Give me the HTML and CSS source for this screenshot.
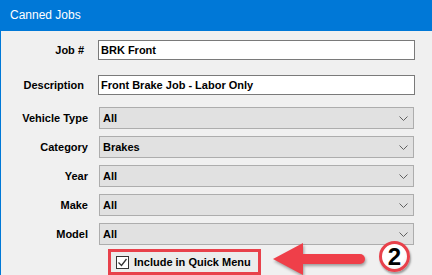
FILE: index.html
```html
<!DOCTYPE html>
<html lang="en">
<head>
    <meta charset="UTF-8" />
    <title>Canned Jobs</title>
    <link rel="stylesheet" href="styles.css">
</head>
<body>
<div class="window">
    <div class="titlebar">Canned Jobs</div>

    <div class="content">
        <div class="form form-top">
            <span class="label">Job #</span>
            <div class="field">BRK Front</div>

            <span class="label">Description</span>
            <div class="field">Front Brake Job - Labor Only</div>
        </div>

        <div class="form form-lists">
            <span class="label">Vehicle Type</span>
            <div class="combo"><span>All</span><svg class="chev" width="9" height="5" viewBox="0 0 9 5"><path d="M0.5 0.5 L4.5 4.5 L8.5 0.5" fill="none" stroke="#606060" stroke-width="1"/></svg></div>

            <span class="label">Category</span>
            <div class="combo"><span>Brakes</span><svg class="chev" width="9" height="5" viewBox="0 0 9 5"><path d="M0.5 0.5 L4.5 4.5 L8.5 0.5" fill="none" stroke="#606060" stroke-width="1"/></svg></div>

            <span class="label">Year</span>
            <div class="combo"><span>All</span><svg class="chev" width="9" height="5" viewBox="0 0 9 5"><path d="M0.5 0.5 L4.5 4.5 L8.5 0.5" fill="none" stroke="#606060" stroke-width="1"/></svg></div>

            <span class="label">Make</span>
            <div class="combo"><span>All</span><svg class="chev" width="9" height="5" viewBox="0 0 9 5"><path d="M0.5 0.5 L4.5 4.5 L8.5 0.5" fill="none" stroke="#606060" stroke-width="1"/></svg></div>

            <span class="label">Model</span>
            <div class="combo"><span>All</span><svg class="chev" width="9" height="5" viewBox="0 0 9 5"><path d="M0.5 0.5 L4.5 4.5 L8.5 0.5" fill="none" stroke="#606060" stroke-width="1"/></svg></div>
        </div>

        <div class="quick-row">
            <div class="callout">
                <span class="checkbox">
                    <svg width="11" height="11" viewBox="0 0 11 11"><path d="M1.5 5.5 L4.5 8.5 L9.5 2" fill="none" stroke="#333" stroke-width="1.3"/></svg>
                </span>
                <span class="check-text">Include in Quick Menu</span>
            </div>

            <!-- annotation arrow -->
            <svg class="arrow" width="96" height="36" viewBox="0 0 96 36">
                <path d="M28 13 L88 13 A5 5 0 0 1 88 23 L28 23 Z" fill="#ef3f49"/>
                <polygon points="1,18 31,2 31,34" fill="#ef3f49"/>
            </svg>

            <span class="step">2</span>
        </div>
    </div>
</div>
</body>
</html>
```

FILE: styles.css
```css
body {
    margin: 0;
    background: #f0f0f0;
    font-family: "Liberation Sans", Arial, sans-serif;
}

.window {
    width: 432px;
    height: 275px;
    overflow: hidden;
    border-left: 1px solid #0078d7;
    box-sizing: border-box;
    background: #f0f0f0;
}

.titlebar {
    height: 31px;
    line-height: 31px;
    padding-left: 9px;
    background: #0078d7;
    color: #fff;
    font-size: 12px;
}

.content {
    padding-top: 9px;
}

.form {
    display: grid;
    align-items: center;
}

.form-top {
    grid-template-columns: 83px 317px;
    column-gap: 14px;
    row-gap: 15px;
}

.form-lists {
    margin-top: 12px;
    grid-template-columns: 87px 315px;
    column-gap: 11px;
    row-gap: 7px;
}

.label {
    text-align: right;
    font-size: 11px;
    font-weight: bold;
    color: #000;
}

.field {
    height: 20px;
    line-height: 18px;
    box-sizing: border-box;
    border: 1px solid #7a7a7a;
    background: #fff;
    padding-left: 2px;
    font-size: 11px;
    font-weight: bold;
}

.combo {
    height: 22px;
    box-sizing: border-box;
    border: 1px solid #adadad;
    background: #e1e1e1;
    padding: 0 5px 0 3px;
    display: flex;
    align-items: center;
    justify-content: space-between;
    font-size: 11px;
    font-weight: bold;
}

.quick-row {
    display: flex;
    align-items: flex-start;
    margin-top: 4px;
    margin-left: 107px;
}

.callout {
    width: 153px;
    height: 26px;
    box-sizing: border-box;
    border: 3px solid #e8414b;
    background: #ececec;
    display: flex;
    align-items: center;
    padding-left: 5px;
    gap: 5px;
}

.checkbox {
    width: 13px;
    height: 13px;
    box-sizing: border-box;
    border: 1px solid #333;
    background: #fff;
    display: flex;
    align-items: center;
    justify-content: center;
}

.check-text {
    font-size: 11px;
    font-weight: bold;
}

.arrow {
    margin-left: 11px;
    margin-top: -8px;
    filter: drop-shadow(1px 2px 1.5px rgba(0, 0, 0, 0.35));
}

.step {
    width: 31px;
    height: 31px;
    margin-left: 11px;
    margin-top: -8px;
    box-sizing: border-box;
    border: 3px solid #e8414b;
    border-radius: 50%;
    background: radial-gradient(circle at 40% 35%, #fff 55%, #e6e6e6);
    box-shadow: 1px 2px 2px rgba(0, 0, 0, 0.35);
    display: flex;
    align-items: center;
    justify-content: center;
    font-size: 24px;
    line-height: 1;
    font-weight: bold;
    color: #000;
}
```
